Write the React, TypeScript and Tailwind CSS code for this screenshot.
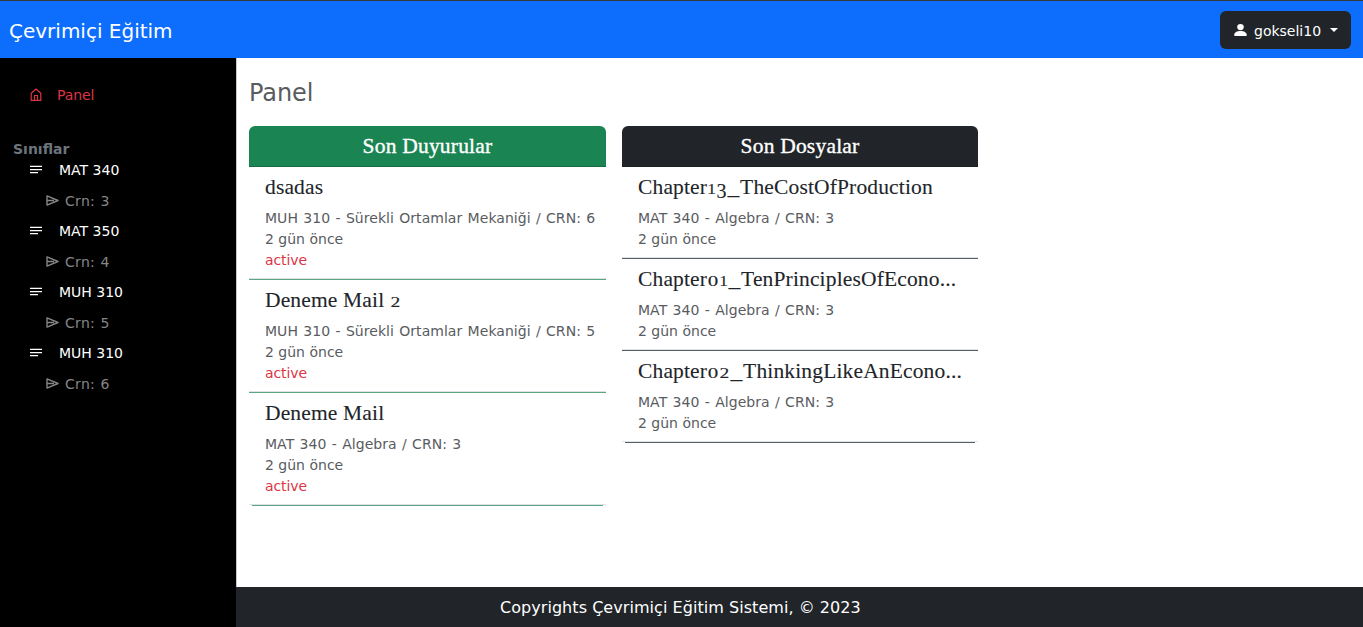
import React from "react";

const sans = "font-['DejaVu_Sans',sans-serif]";
const serif = "font-['Liberation_Serif',serif]";

function HomeIcon() {
  return (
    <svg width="12" height="13" viewBox="0 0 12 13" fill="none" stroke="currentColor" strokeWidth="1.2" className="block shrink-0">
      <path d="M1.2 12.4V5.2L6 1l4.8 4.2v7.2z" strokeLinejoin="round" />
      <path d="M4.5 12V7.5h3V12" />
    </svg>
  );
}

function LinesIcon() {
  return (
    <svg width="12" height="9" viewBox="0 0 12 9" fill="currentColor" className="block shrink-0">
      <path d="M0 .8h12v1.3H0zM0 3.9h12v1.3H0zM0 7h8v1.3H0z" />
    </svg>
  );
}

function SendIcon() {
  return (
    <svg width="13" height="11" viewBox="0 0 13 11" fill="none" stroke="currentColor" strokeWidth="1.4" strokeLinejoin="round" className="block shrink-0">
      <path d="M1 .9 12 5.5 1 10.1zM1 5.5h7" />
    </svg>
  );
}

function UserIcon() {
  return (
    <svg width="13" height="12" viewBox="0 0 13 12" fill="currentColor" className="block shrink-0">
      <ellipse cx="6.5" cy="3.1" rx="3.3" ry="3.1" />
      <path d="M.2 11.2C.2 8.4 3 7 6.5 7s6.3 1.4 6.3 4.2c0 .5-.3.8-.8.8H1c-.5 0-.8-.3-.8-.8z" />
    </svg>
  );
}

const digitStyles: Record<string, string> = {
  "0": "w-[12px] text-[14.5px] scale-x-145",
  "1": "w-[9px] text-[14.5px] scale-x-120",
  "2": "w-[11px] text-[14.5px] scale-x-135",
  "3": "top-[4px] w-[11px] text-[20px]",
  _: "w-[13px] scale-x-110 [-webkit-text-stroke:0]",
};

/* Draws digits in old-style proportions: 0-2 at x-height, 3 below the baseline. */
function OldStyle({ text }: { text: string }) {
  return (
    <>
      {text.split(/([0-3_])/).map((part, i) =>
        digitStyles[part] ? (
          <span key={i} className={`relative inline-block text-center leading-none tracking-normal ${digitStyles[part]}`}>
            {part}
          </span>
        ) : (
          part
        ),
      )}
    </>
  );
}

type Item = { title: string; course: string; active?: boolean };

const announcements: Item[] = [
  { title: "dsadas", course: "MUH 310 - Sürekli Ortamlar Mekaniği / CRN: 6", active: true },
  { title: "Deneme Mail 2", course: "MUH 310 - Sürekli Ortamlar Mekaniği / CRN: 5", active: true },
  { title: "Deneme Mail", course: "MAT 340 - Algebra / CRN: 3", active: true },
];

const files: Item[] = [
  { title: "Chapter13_TheCostOfProduction", course: "MAT 340 - Algebra / CRN: 3" },
  { title: "Chapter01_TenPrinciplesOfEcono...", course: "MAT 340 - Algebra / CRN: 3" },
  { title: "Chapter02_ThinkingLikeAnEcono...", course: "MAT 340 - Algebra / CRN: 3" },
];

type CardProps = { title: string; items: Item[]; head: string; line: string; width: string };

function Card({ title, items, head, line, width }: CardProps) {
  return (
    <section className={width}>
      <h2 className={`${serif} flex h-[41px] items-center justify-center rounded-t-[6px] border-b text-[21.5px] leading-6 tracking-[0.2px] text-white [-webkit-text-stroke:0.35px_white] ${head}`}>
        {title}
      </h2>
      <ul>
        {items.map((item) => (
          <li key={item.title} className="group">
            <div className="border-b border-[#dee2e6] px-4 py-2">
              <h3 className={`${serif} mb-2 h-6 text-[21.5px] leading-6 tracking-[0.15px] whitespace-nowrap text-[#212529] [-webkit-text-stroke:0.1px_#212529]`}>
                <OldStyle text={item.title} />
              </h3>
              <div className="h-[42px] pt-px text-[14px] leading-[21px] whitespace-nowrap text-[#595c5f] has-[.status]:h-[63px]">
                <p className="tracking-[0.04px] [word-spacing:0.85px]">{item.course}</p>
                <p>2 gün önce</p>
                {item.active && <p className="status tracking-[-0.1px] text-[#dc3545]">active</p>}
              </div>
            </div>
            <div className={`h-px group-last:mx-[3px] ${line}`} />
          </li>
        ))}
      </ul>
    </section>
  );
}

const classes = [
  { name: "MAT 340", crn: 3 },
  { name: "MAT 350", crn: 4 },
  { name: "MUH 310", crn: 5 },
  { name: "MUH 310", crn: 6 },
];

export default function App() {
  return (
    <div className={`${sans} flex h-[627px] w-[1363px] flex-col overflow-hidden bg-white`}>
      <header className="flex h-[58px] shrink-0 items-center justify-between border-t border-[#36393e] bg-[#0d6efd] pr-3 pl-[9px]">
        <span className="pt-[2px] text-[20px] leading-[30px] text-white">Çevrimiçi Eğitim</span>
        <button className="flex h-[38px] w-[131px] items-center rounded-[6px] bg-[#212529] pl-[14px] text-[14px] text-white">
          <UserIcon />
          <span className="ml-[7px] w-[67px] pt-[3px] whitespace-nowrap">gokseli10</span>
          <span className="ml-[9px] border-x-4 border-t-4 border-x-transparent border-t-white" />
        </button>
      </header>
      <div className="flex min-h-0 flex-1">
        <aside className="w-[236px] shrink-0 bg-black text-[14px] leading-[21px]">
          <a className="mt-[26px] flex h-[21px] items-center pl-[30px] text-[#dc3545]">
            <HomeIcon />
            <span className="ml-[15px] pt-[2px] tracking-[-0.1px]">Panel</span>
          </a>
          <h2 className="mt-[33px] h-[21px] pt-px pl-[13px] font-bold text-[#6c757d]">Sınıflar</h2>
          <ul>
            {classes.map((c, i) => (
              <li key={i} className="h-[61px]">
                <div className="flex h-[21px] items-center pl-[30px] text-white">
                  <LinesIcon />
                  <span className="ml-[17px] pt-[2px]">{c.name}</span>
                </div>
                <div className="mt-[10px] flex h-[21px] items-center pl-[46px] text-[#868686]">
                  <SendIcon />
                  <span className="ml-[6px] pt-[2px] tracking-[0.3px] [word-spacing:0.7px]">Crn: {c.crn}</span>
                </div>
              </li>
            ))}
          </ul>
        </aside>
        <div className="flex flex-1 flex-col">
          <main className="flex-1 border-l border-[#c8c8c8] pl-3">
            <h1 className="mt-[21px] h-[28px] text-[24px] leading-[29px] tracking-[-0.1px] text-[#595c5f]">Panel</h1>
            <div className="mt-[19px] flex items-start gap-4">
              <Card title="Son Duyurular" items={announcements} head="border-[#166c43] bg-[#1a8552]" line="bg-[#5aa680]" width="w-[357px]" />
              <Card title="Son Dosyalar" items={files} head="border-[#1c1f23] bg-[#212529]" line="bg-[#5a5f64]" width="w-[356px]" />
            </div>
          </main>
          <footer className="flex h-[40px] items-center bg-[#212529] pt-px pl-[264px] text-[16px] tracking-[0.05px] whitespace-nowrap text-white">
            Copyrights Çevrimiçi Eğitim Sistemi, © 2023
          </footer>
        </div>
      </div>
    </div>
  );
}
